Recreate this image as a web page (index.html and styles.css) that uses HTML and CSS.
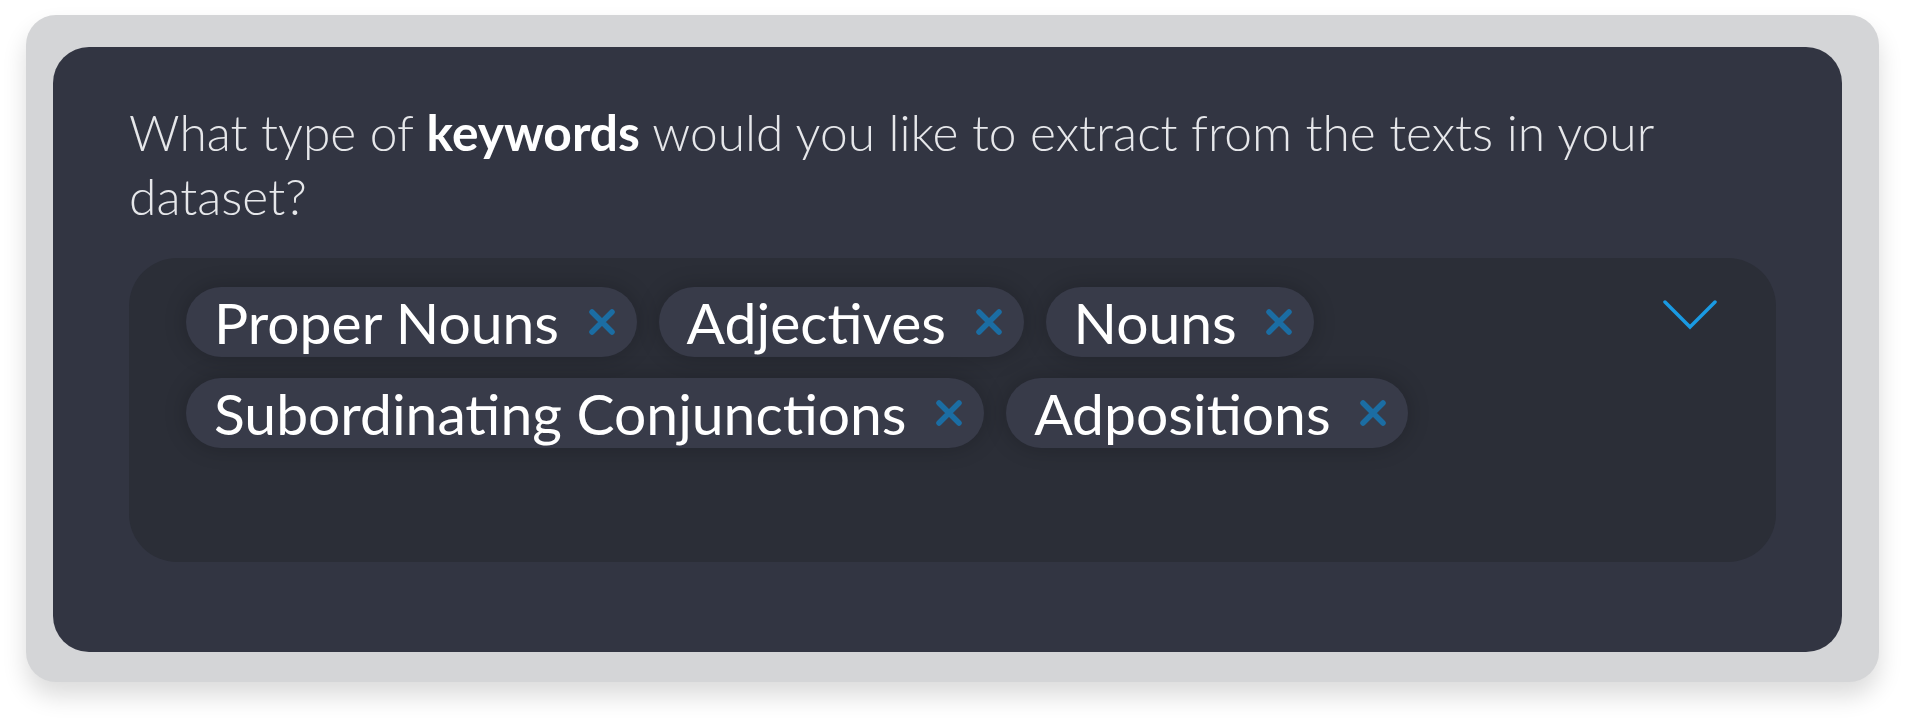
FILE: index.html
```html
<html>
  <head>
    <link rel="stylesheet" href="styles.css">
  </head>
  <body>
    <div class="frame">
      <div class="card">
        <p class="question">
          What type of <b>keywords</b> would you like to extract from the texts in your dataset?
        </p>
        <div class="select">
          <div class="tags">
            <span class="tag">Proper Nouns <i class="remove"><svg viewBox="0 0 28 28"><path d="M4 4 L24 24 M24 4 L4 24"/></svg></i></span>
            <span class="tag">Adjectives <i class="remove"><svg viewBox="0 0 28 28"><path d="M4 4 L24 24 M24 4 L4 24"/></svg></i></span>
            <span class="tag">Nouns <i class="remove"><svg viewBox="0 0 28 28"><path d="M4 4 L24 24 M24 4 L4 24"/></svg></i></span>
            <span class="tag">Subordinating Conjunctions <i class="remove"><svg viewBox="0 0 28 28"><path d="M4 4 L24 24 M24 4 L4 24"/></svg></i></span>
            <span class="tag">Adpositions <i class="remove"><svg viewBox="0 0 28 28"><path d="M4 4 L24 24 M24 4 L4 24"/></svg></i></span>
          </div>
          <div class="caret">
            <svg viewBox="0 0 54 30"><path d="M2 2 L27 27 L52 2"/></svg>
          </div>
        </div>
      </div>
    </div>
  </body>
</html>
```
FILE: styles.css
```css
body,
html {
  margin: 0;
  background-color: #ffffff;
}
* {
  box-sizing: border-box;
}
body {
  font-family: 'Lato', 'Open Sans', sans-serif;
  -webkit-font-smoothing: antialiased;
}

.frame {
  margin: 15px 0 0 26px;
  width: 1853px;
  height: 667px;
  padding: 32px 37px 30px 27px;
  background-color: #d4d5d7;
  border-radius: 30px;
  box-shadow: 0 14px 24px rgba(0, 0, 0, 0.14);
}

.card {
  height: 100%;
  padding: 53px 66px 0 76px;
  background-color: #323542;
  border-radius: 36px;
}

.question {
  margin: 0;
  font-size: 49.7px;
  line-height: 64px;
  font-weight: 300;
  color: #e6e7ea;
}
.question b {
  font-weight: 700;
  color: #ffffff;
}

.select {
  margin-top: 30px;
  height: 304px;
  padding: 29px 59px 0 57px;
  display: flex;
  justify-content: space-between;
  align-items: flex-start;
  background-color: #2b2e37;
  border-radius: 48px;
}

.tags {
  display: flex;
  flex-wrap: wrap;
  gap: 21px 22px;
  width: 1300px;
}

.tag {
  display: inline-flex;
  align-items: center;
  height: 70px;
  padding: 0 21px 0 28px;
  border-radius: 35px;
  background-color: #383b49;
  box-shadow: 0 0 22px rgba(0, 0, 0, 0.22);
  color: #ffffff;
  font-size: 57px;
  white-space: pre;
}

.remove {
  display: flex;
  margin-left: 14px;
  width: 28px;
  height: 28px;
}
.remove svg {
  width: 28px;
  height: 28px;
}
.remove path {
  fill: none;
  stroke: #1b6da3;
  stroke-width: 5.5;
  stroke-linecap: round;
}

.caret {
  margin-top: 13px;
  width: 54px;
  height: 30px;
}
.caret svg {
  width: 54px;
  height: 30px;
}
.caret path {
  fill: none;
  stroke: #1a9ae2;
  stroke-width: 3.5;
  stroke-linecap: round;
}
```
